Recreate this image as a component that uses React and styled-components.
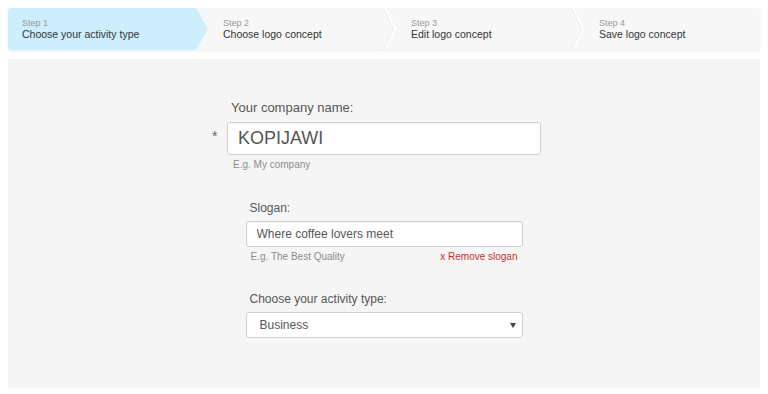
import React, { useState } from 'react';
import styled, { createGlobalStyle } from 'styled-components';

const GlobalStyle = createGlobalStyle`
  html, body {
    margin: 0;
    padding: 0;
    background: #ffffff;
    font-family: "Liberation Sans", Arial, sans-serif;
  }
  * {
    box-sizing: border-box;
  }
`;

const Page = styled.div`
  padding: 8px;
  display: flex;
  flex-direction: column;
  gap: 9px;
`;

const StepBar = styled.div`
  display: flex;
  height: 42px;
  background: #f7f7f7;
  border-radius: 3px;
  box-shadow: 0 1px 2px rgba(0, 0, 0, 0.08);
`;

const Step = styled.div`
  position: relative;
  flex: none;
  width: 25%;
  display: flex;
  flex-direction: column;
  justify-content: center;
  padding-left: ${({ $first }) => ($first ? '14px' : '27px')};
  background: ${({ $active }) => ($active ? '#cdeefc' : 'transparent')};
  border-radius: ${({ $first }) => ($first ? '3px 0 0 3px' : '0')};

  &::before,
  &::after {
    content: '';
    display: ${({ $last }) => ($last ? 'none' : 'block')};
    position: absolute;
    top: 0;
    right: -12px;
    width: 12px;
    height: 100%;
    z-index: 1;
  }

  &::before {
    right: ${({ $active }) => ($active ? '-12px' : '-11px')};
    background: ${({ $active }) => ($active ? '#cdeefc' : '#ebebeb')};
    clip-path: ${({ $active }) =>
      $active
        ? 'polygon(0 0, 100% 50%, 0 100%)'
        : 'polygon(0 0, 2px 0, 100% 50%, 2px 100%, 0 100%, calc(100% - 2px) 50%)'};
  }

  &::after {
    display: ${({ $last, $active }) => ($last || $active ? 'none' : 'block')};
    background: #ffffff;
    clip-path: polygon(0 0, 2px 0, 100% 50%, 2px 100%, 0 100%, calc(100% - 2px) 50%);
  }
`;

const StepNumber = styled.span`
  font-size: 9px;
  line-height: 10px;
  color: #9a9a9a;
`;

const StepTitle = styled.span`
  font-size: 10.5px;
  line-height: 12px;
  color: #333333;
`;

const Panel = styled.div`
  height: 329px;
  background: #f5f5f5;
  border-radius: 2px;
  padding-top: 41px;
  display: flex;
  flex-direction: column;
  align-items: center;
`;

const Field = styled.div`
  width: ${({ $wide }) => ($wide ? '314px' : '277px')};
  margin-top: ${({ $gap }) => $gap || 0}px;
  display: flex;
  flex-direction: column;
`;

const Label = styled.label`
  font-size: ${({ $big }) => ($big ? '13px' : '12px')};
  line-height: ${({ $big }) => ($big ? '15px' : '14px')};
  color: #555555;
  padding-left: 4px;
  margin-bottom: ${({ $big }) => ($big ? '7px' : '6px')};
`;

const InputWrap = styled.div`
  position: relative;
`;

const Required = styled.span`
  position: absolute;
  left: -15px;
  top: 6px;
  font-size: 14px;
  color: #666666;
`;

const TextInput = styled.input`
  width: 100%;
  height: ${({ $big }) => ($big ? '33px' : '26px')};
  padding: 0 10px;
  border: 1px solid #cfcfcf;
  border-radius: 3px;
  background: #ffffff;
  box-shadow: inset 0 1px 1px rgba(0, 0, 0, 0.04);
  font-family: "Liberation Sans", Arial, sans-serif;
  font-size: ${({ $big }) => ($big ? '18px' : '12px')};
  color: #555555;
  outline: none;
`;

const SelectWrap = styled.div`
  position: relative;

  &::after {
    content: '';
    position: absolute;
    right: 7px;
    top: 11px;
    border-left: 3px solid transparent;
    border-right: 3px solid transparent;
    border-top: 5px solid #444444;
    pointer-events: none;
  }
`;

const Select = styled.select`
  width: 100%;
  height: 26px;
  padding: 0 13px;
  appearance: none;
  -webkit-appearance: none;
  border: 1px solid #cfcfcf;
  border-radius: 3px;
  background: #ffffff;
  font-family: "Liberation Sans", Arial, sans-serif;
  font-size: 12px;
  color: #555555;
  outline: none;
`;

const HintRow = styled.div`
  display: flex;
  justify-content: space-between;
  align-items: center;
  margin-top: 4px;
  padding-left: ${({ $indent }) => $indent || 5}px;
  padding-right: 5px;
  font-size: 10px;
  line-height: 12px;
`;

const Hint = styled.span`
  color: #8c8c8c;
`;

const RemoveLink = styled.a`
  color: #c9302c;
  cursor: pointer;
  text-decoration: none;
`;

const steps = [
  { n: 1, title: 'Choose your activity type' },
  { n: 2, title: 'Choose logo concept' },
  { n: 3, title: 'Edit logo concept' },
  { n: 4, title: 'Save logo concept' },
];

export default function App() {
  const [name, setName] = useState('KOPIJAWI');
  const [slogan, setSlogan] = useState('Where coffee lovers meet');
  const [activity, setActivity] = useState('Business');

  return (
    <>
      <GlobalStyle />
      <Page>
        <StepBar>
          {steps.map((s, i) => (
            <Step key={s.n} $active={i === 0} $first={i === 0} $last={i === steps.length - 1}>
              <StepNumber>Step {s.n}</StepNumber>
              <StepTitle>{s.title}</StepTitle>
            </Step>
          ))}
        </StepBar>

        <Panel>
          <Field $wide>
            <Label $big>Your company name:</Label>
            <InputWrap>
              <Required>*</Required>
              <TextInput $big value={name} onChange={(e) => setName(e.target.value)} />
            </InputWrap>
            <HintRow $indent={6}>
              <Hint>E.g. My company</Hint>
            </HintRow>
          </Field>

          <Field $gap={30}>
            <Label>Slogan:</Label>
            <TextInput value={slogan} onChange={(e) => setSlogan(e.target.value)} />
            <HintRow>
              <Hint>E.g. The Best Quality</Hint>
              <RemoveLink>x Remove slogan</RemoveLink>
            </HintRow>
          </Field>

          <Field $gap={29}>
            <Label>Choose your activity type:</Label>
            <SelectWrap>
              <Select value={activity} onChange={(e) => setActivity(e.target.value)}>
                <option>Business</option>
                <option>Food &amp; Drink</option>
                <option>Technology</option>
              </Select>
            </SelectWrap>
          </Field>
        </Panel>
      </Page>
    </>
  );
}
